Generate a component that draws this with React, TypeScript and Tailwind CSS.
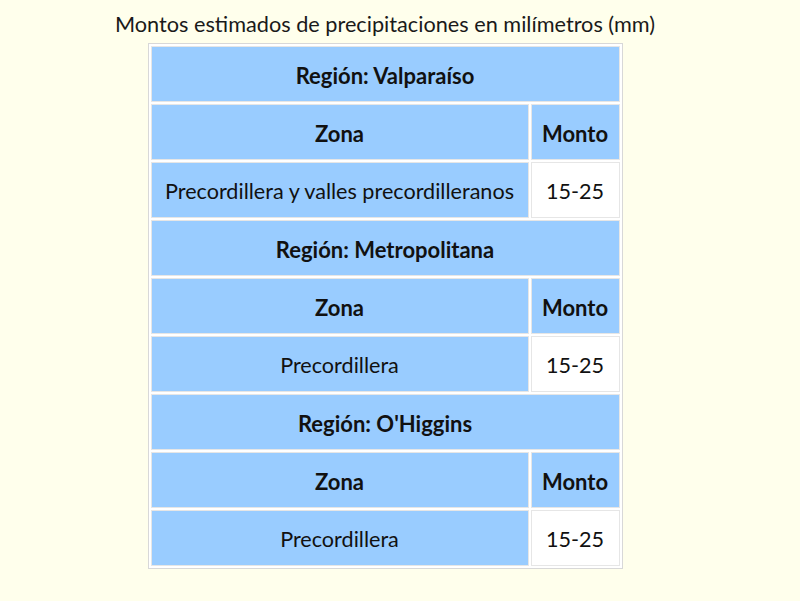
const regiones = [
  { nombre: 'Valparaíso', zona: 'Precordillera y valles precordilleranos', monto: '15-25' },
  { nombre: 'Metropolitana', zona: 'Precordillera', monto: '15-25' },
  { nombre: "O'Higgins", zona: 'Precordillera', monto: '15-25' },
];

const cell = 'h-[56px] border border-[#e6e6e6] text-center align-middle pt-[3px] pb-0';

export default function App() {
  return (
    <div
      className="min-h-[601px] bg-[#ffffec] text-[#111]"
      style={{ fontFamily: 'Lato, "Open Sans", sans-serif' }}
    >
      <div className="w-[770px] flex flex-col items-center pt-[9px]">
        <h1 className="text-[21.7px] leading-[30px] text-[#1a1a1a]">
          Montos estimados de precipitaciones en milímetros (mm)
        </h1>
        <table className="mt-[4px] w-[475px] border border-[#d8d8d8] bg-white border-separate border-spacing-[2px] text-[21.6px]">
          <tbody>
            {regiones.map((r) => (
              <>
                <tr key={r.nombre + 'h'}>
                  <th colSpan={2} className={`${cell} bg-[#99ccff] font-bold text-[22px]`}>
                    Región: {r.nombre}
                  </th>
                </tr>
                <tr key={r.nombre + 'z'}>
                  <th className={`${cell} bg-[#99ccff] font-bold text-[22px]`}>Zona</th>
                  <th className={`${cell} w-[89px] bg-[#99ccff] font-bold text-[22px]`}>Monto</th>
                </tr>
                <tr key={r.nombre + 'd'}>
                  <td className={`${cell} bg-[#99ccff] px-2`}>{r.zona}</td>
                  <td className={`${cell} bg-white`}>{r.monto}</td>
                </tr>
              </>
            ))}
          </tbody>
        </table>
      </div>
    </div>
  );
}
